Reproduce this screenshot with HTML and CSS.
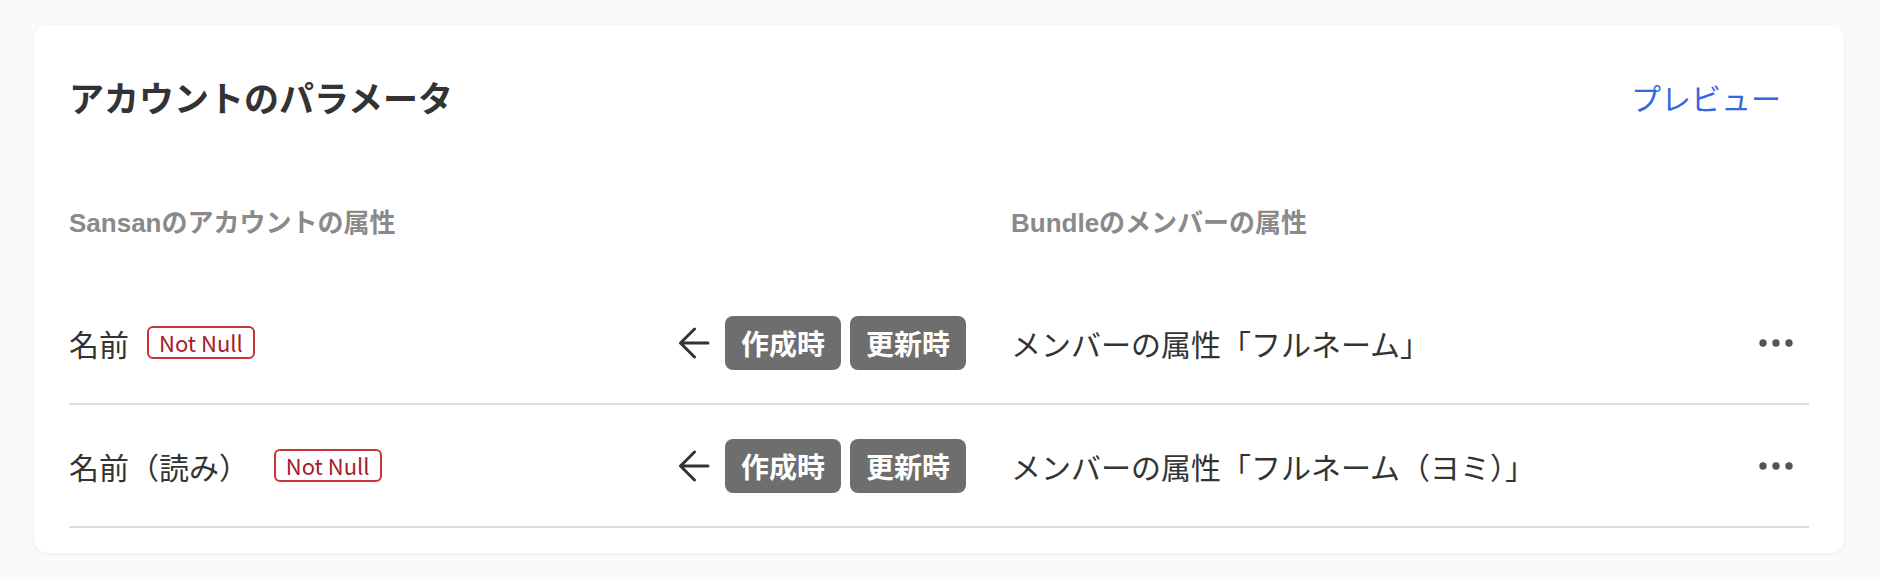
FILE: index.html
```html
<!DOCTYPE html>
<html lang="ja">

<head>
    <meta charset="UTF-8" />
    <title>アカウントのパラメータ</title>
    <link rel="stylesheet" href="styles.css">
</head>

<body>
    <section class="card">
        <header class="card-header">
            <h2 class="card-title">アカウントのパラメータ</h2>
            <button class="preview-button" type="button">プレビュー</button>
        </header>

        <div class="mapping-head">
            <div>Sansanのアカウントの属性</div>
            <div>Bundleのメンバーの属性</div>
        </div>

        <ul class="mapping-list">
            <li class="mapping-row">
                <div class="source">
                    <span class="source-name">名前</span>
                    <span class="badge-required">Not Null</span>
                    <div class="sync">
                        <svg class="sync-arrow" width="32" height="32" viewBox="0 0 32 32">
                            <path d="M30 16H2.5M16.5 2L2.5 16L16.5 30" fill="none" stroke="#333" stroke-width="3" stroke-linecap="round" stroke-linejoin="round" />
                        </svg>
                        <span class="chip">作成時</span>
                        <span class="chip">更新時</span>
                    </div>
                </div>
                <div class="target">
                    <span class="target-name">メンバーの属性「フルネーム」</span>
                    <button class="more-button" type="button">
                        <svg width="40" height="20" viewBox="0 0 40 20">
                            <circle cx="7" cy="10" r="3.7" fill="#555" />
                            <circle cx="20" cy="10" r="3.7" fill="#555" />
                            <circle cx="33" cy="10" r="3.7" fill="#555" />
                        </svg>
                    </button>
                </div>
            </li>
            <li class="mapping-row">
                <div class="source">
                    <span class="source-name">名前（読み）&nbsp;</span>
                    <span class="badge-required">Not Null</span>
                    <div class="sync">
                        <svg class="sync-arrow" width="32" height="32" viewBox="0 0 32 32">
                            <path d="M30 16H2.5M16.5 2L2.5 16L16.5 30" fill="none" stroke="#333" stroke-width="3" stroke-linecap="round" stroke-linejoin="round" />
                        </svg>
                        <span class="chip">作成時</span>
                        <span class="chip">更新時</span>
                    </div>
                </div>
                <div class="target">
                    <span class="target-name">メンバーの属性「フルネーム（ヨミ）」</span>
                    <button class="more-button" type="button">
                        <svg width="40" height="20" viewBox="0 0 40 20">
                            <circle cx="7" cy="10" r="3.7" fill="#555" />
                            <circle cx="20" cy="10" r="3.7" fill="#555" />
                            <circle cx="33" cy="10" r="3.7" fill="#555" />
                        </svg>
                    </button>
                </div>
            </li>
        </ul>
    </section>
</body>

</html>
```

FILE: styles.css
```css
body {
    margin: 0;
    padding: 25px 36px 27px 34px;
    background-color: #fafafa;
    color: #333;
    font-family: "Noto Sans CJK JP", "Noto Sans", sans-serif;
}

.card {
    background-color: #fff;
    border-radius: 14px;
    box-shadow: 0 1px 4px rgba(0, 0, 0, 0.06);
    padding: 47px 35px 25px;
}

.card-header {
    display: flex;
    justify-content: space-between;
    align-items: center;
}

.card-title {
    margin: 0;
    font-size: 35px;
    line-height: 50px;
    font-weight: bold;
    color: #333;
}

.preview-button {
    border: none;
    background: none;
    padding: 0 28px;
    font-family: inherit;
    font-size: 30px;
    line-height: 50px;
    color: #3567e0;
    cursor: pointer;
}

.mapping-head,
.mapping-row {
    display: grid;
    grid-template-columns: 897px 1fr;
    column-gap: 45px;
}

.mapping-head {
    padding: 84px 0 42px;
    font-family: "Liberation Sans", "Noto Sans CJK JP", sans-serif;
    font-size: 26px;
    line-height: 34px;
    font-weight: bold;
    color: #8a8a8a;
}

.mapping-list {
    list-style: none;
    margin: 0;
    padding: 0;
}

.mapping-row {
    min-height: 121px;
    align-items: center;
    border-bottom: 2px solid #dddddd;
    font-size: 30px;
    line-height: 40px;
}

.source,
.target {
    display: flex;
    align-items: center;
}

.badge-required {
    margin-left: 18px;
    padding: 0 10px;
    border: 2px solid #c93336;
    border-radius: 6px;
    font-size: 22px;
    line-height: 29px;
    color: #a3202b;
}

.sync {
    display: flex;
    align-items: center;
    gap: 9px;
    margin-left: auto;
}

.sync-arrow {
    margin-right: 6px;
}

.chip {
    padding: 0 16px;
    height: 54px;
    display: flex;
    align-items: center;
    border-radius: 8px;
    background-color: #6e6e6e;
    color: #fff;
    font-size: 28px;
    font-weight: bold;
}

.target {
    justify-content: space-between;
}

.more-button {
    display: flex;
    border: none;
    background: none;
    padding: 0;
    margin-right: 13px;
    cursor: pointer;
}
```
